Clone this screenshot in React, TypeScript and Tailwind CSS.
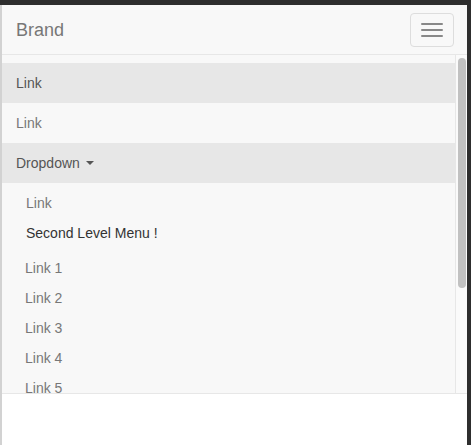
export default function App() {
  const subLinks = ["Link 1", "Link 2", "Link 3", "Link 4", "Link 5"];

  return (
    <div className="flex h-[445px] w-[471px] flex-col overflow-hidden bg-white font-['Liberation_Sans',Arial,sans-serif]">
      {/* window top edge */}
      <div className="h-[5px] bg-[#2e2e2e]" />

      <div className="flex flex-1">
        <div className="flex flex-1 flex-col border-l-2 border-[#d2d2d2]">
          {/* navbar header */}
          <div className="flex h-[50px] items-center justify-between border-b border-[#e7e7e7] bg-[#f8f8f8] pl-[14px] pr-[13px]">
            <span className="text-[18px] leading-[20px] text-[#777]">Brand</span>
            <button className="flex h-[34px] w-[44px] flex-col items-center justify-center gap-[4px] rounded-[4px] border border-[#ddd]">
              <span className="h-[2px] w-[22px] rounded-[1px] bg-[#888]" />
              <span className="h-[2px] w-[22px] rounded-[1px] bg-[#888]" />
              <span className="h-[2px] w-[22px] rounded-[1px] bg-[#888]" />
            </button>
          </div>

          {/* collapsed menu, scrolled */}
          <div className="flex h-[339px] border-b border-[#e7e7e7] bg-[#f8f8f8]">
            <div className="flex-1 overflow-hidden pt-[8px] text-[14px] leading-[20px]">
              <div className="flex h-[40px] items-center bg-[#e7e7e7] pl-[14px] text-[#555]">Link</div>
              <div className="flex h-[40px] items-center pl-[14px] text-[#777]">Link</div>
              <div className="flex h-[40px] items-center bg-[#e7e7e7] pl-[14px] text-[#555]">
                Dropdown
                <span className="ml-[6px] h-0 w-0 border-x-[4px] border-t-[4px] border-x-transparent border-t-[#555]" />
              </div>

              <div className="pt-[5px]">
                <div className="flex h-[30px] items-center pl-[24px] text-[#777]">Link</div>
                <div className="flex h-[30px] items-center pl-[24px] text-[#333]">Second Level Menu !</div>
                <div className="pt-[5px]">
                  {subLinks.map((label) => (
                    <div key={label} className="flex h-[30px] items-center pl-[23px] text-[#777]">
                      {label}
                    </div>
                  ))}
                </div>
              </div>
            </div>

            {/* scrollbar */}
            <div className="w-[12px] border-l border-[#e7e7e7] bg-[#fafafa] pl-[2px] pt-[3px]">
              <div className="h-[230px] w-[8px] rounded-full bg-[#c1c1c1]" />
            </div>
          </div>

          <div className="flex-1 bg-white" />
        </div>

        {/* window right edge */}
        <div className="w-[4px] bg-[#2e2e2e]" />
      </div>
    </div>
  );
}
